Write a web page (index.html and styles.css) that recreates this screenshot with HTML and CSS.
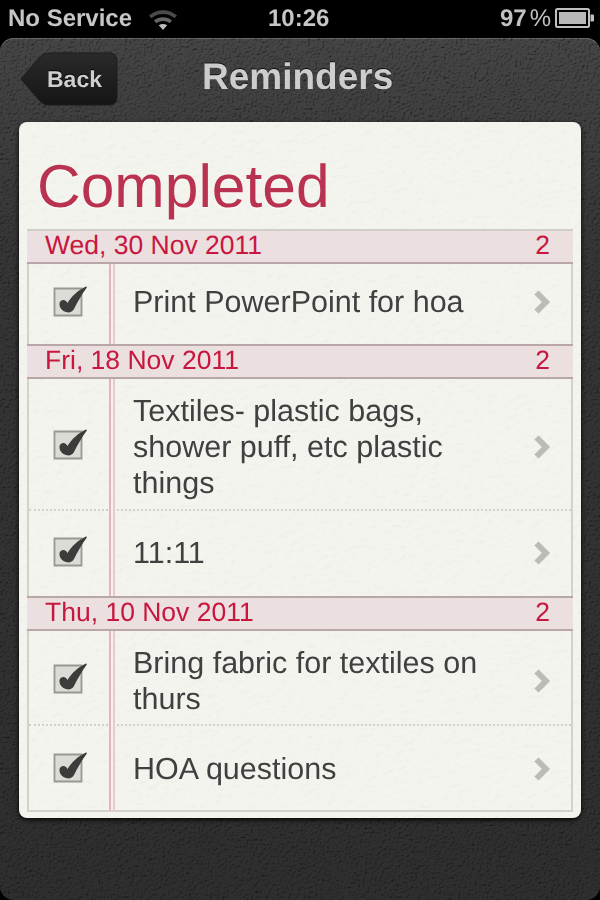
FILE: index.html
```html
<!DOCTYPE html>
<html lang="en">
<head>
  <meta charset="UTF-8">
  <meta name="viewport" content="width=device-width, initial-scale=1.0">
  <title>Reminders - Completed</title>
  <link rel="stylesheet" href="styles.css">
</head>
<body>
<svg class="defs" width="0" height="0">
  <defs>
    <filter id="leather" x="0" y="0" width="100%" height="100%">
      <feTurbulence type="fractalNoise" baseFrequency="0.42" numOctaves="3" seed="4"/>
      <feDiffuseLighting surfaceScale="2.6" diffuseConstant="1.1" lighting-color="#ffffff">
        <feDistantLight azimuth="235" elevation="62"/>
      </feDiffuseLighting>
    </filter>
    <filter id="paper" x="0" y="0" width="100%" height="100%">
      <feTurbulence type="fractalNoise" baseFrequency="0.14 0.2" numOctaves="4" seed="9"/>
      <feDiffuseLighting surfaceScale="0.9" diffuseConstant="1.1" lighting-color="#ffffff">
        <feDistantLight azimuth="235" elevation="66"/>
      </feDiffuseLighting>
    </filter>
    <symbol id="tick" viewBox="0 0 34 32">
      <path class="tick-box" d="M1.500 3.500h27v27h-27z"/>
      <path class="tick-mark" d="M6.500 18C7.500 14.500 11.500 14 13.500 16.500L14.500 18C18.500 11.500 25 5 33 1.500 34 1.200 34 2.500 33.500 3 29 9 24.500 17 21 24 19.500 27 16 28 13 27 9.500 26 6 23 6.500 18z"/>
    </symbol>
    <symbol id="chevron" viewBox="0 0 18 26">
      <path class="chevron-shade" d="M1 5.500l4.500-4.500 12 12-12 12-4.500-4.500 7.500-7.500z"/>
    </symbol>
  </defs>
</svg>

<div class="statusbar">
  <span class="carrier">No Service</span>
  <svg class="wifi" viewBox="0 0 30 22" width="30" height="22">
    <path class="wifi-outer" d="M1 7.500C9 .5 21 .5 29 7.500l-2.400 2.700C20 4.500 10 4.500 3.400 10.200z"/>
    <path class="wifi-mid" d="M6 12.500c5.200-4.300 12.800-4.300 18 0l-2.400 2.700c-3.800-3-9.400-3-13.200 0z"/>
    <path class="wifi-dot" d="M10.800 17.300c2.500-1.700 5.900-1.700 8.400 0L15 22z"/>
  </svg>
  <span class="clock">10:26</span>
  <span class="level">97<span class="percent">%</span></span>
  <svg class="battery" viewBox="0 0 40 20" width="40" height="20">
    <rect class="battery-shell" x="1" y="1" width="33" height="18" rx="1.500"/>
    <rect class="battery-fill" x="4" y="4" width="27" height="12"/>
    <path class="battery-tip" d="M35.500 6.500h2.500a1 1 0 0 1 1 1v5a1 1 0 0 1-1 1h-2.500z"/>
  </svg>
</div>

<div class="panel">
  <svg class="grain grain-leather"><rect width="100%" height="100%" filter="url(#leather)"/></svg>
  <div class="navbar">
    <a class="back">
      <svg class="back-shape" viewBox="0 0 98 54" width="98" height="54">
        <defs>
          <linearGradient id="backfill" x1="0" y1="0" x2="0" y2="1">
            <stop offset="0" stop-color="#2a2a2a"/>
            <stop offset="1" stop-color="#151515"/>
          </linearGradient>
        </defs>
        <path d="M1 27L19 6C22 2.500 25 1 29 1h60c5 0 8 3 8 8v36c0 5-3 8-8 8H29c-4 0-7-1.500-10-5z" fill="url(#backfill)" stroke="#1c1c1c"/>
      </svg>
      <span class="back-label">Back</span>
    </a>
    <h1 class="title">Reminders</h1>
  </div>

  <div class="card">
    <svg class="grain grain-paper"><rect width="100%" height="100%" filter="url(#paper)"/></svg>
    <h2 class="heading">Completed</h2>
    <div class="sheet">
      <div class="day day-first"><span>Wed, 30 Nov 2011</span><span>2</span></div>
      <div class="item item-a">
        <div class="mark"><svg class="tick"><use href="#tick"/></svg></div>
        <div class="margin"></div>
        <div class="body"><p>Print PowerPoint for hoa</p><svg class="chevron"><use href="#chevron"/></svg></div>
      </div>

      <div class="day"><span>Fri, 18 Nov 2011</span><span>2</span></div>
      <div class="item item-b">
        <div class="mark dotted"><svg class="tick"><use href="#tick"/></svg></div>
        <div class="margin"></div>
        <div class="body dotted"><p>Textiles- plastic bags,<br>shower puff, etc plastic<br>things</p><svg class="chevron"><use href="#chevron"/></svg></div>
      </div>
      <div class="item item-c">
        <div class="mark"><svg class="tick"><use href="#tick"/></svg></div>
        <div class="margin"></div>
        <div class="body"><p>11:11</p><svg class="chevron"><use href="#chevron"/></svg></div>
      </div>

      <div class="day"><span>Thu, 10 Nov 2011</span><span>2</span></div>
      <div class="item item-d">
        <div class="mark dotted"><svg class="tick"><use href="#tick"/></svg></div>
        <div class="margin"></div>
        <div class="body dotted"><p>Bring fabric for textiles on<br>thurs</p><svg class="chevron"><use href="#chevron"/></svg></div>
      </div>
      <div class="item item-e">
        <div class="mark"><svg class="tick"><use href="#tick"/></svg></div>
        <div class="margin"></div>
        <div class="body"><p>HOA questions</p><svg class="chevron"><use href="#chevron"/></svg></div>
      </div>
    </div>
  </div>
</div>
</body>
</html>
```

FILE: styles.css
```css
* {
  box-sizing: border-box;
}
html, body {
  margin: 0;
  height: 900px;
  overflow: hidden;
  background-color: #000;
}
body {
  font-family: "Liberation Sans", Arial, sans-serif;
  text-rendering: geometricPrecision;
  display: flex;
  flex-direction: column;
}
.defs {
  position: absolute;
}

/* status bar */
.statusbar {
  height: 38px;
  flex: none;
  display: flex;
  align-items: center;
  padding: 0 5px 0 8px;
  color: #c6c6c6;
  font-size: 24px;
  font-weight: bold;
}
.statusbar > * {
  flex: none;
}
.carrier {
  width: 140px;
}
.wifi {
  margin-top: -1px;
}
.wifi-outer { fill: #4a4a4a; }
.wifi-mid { fill: #666; }
.wifi-dot { fill: #bdbdbd; }
.clock {
  margin-left: 90px;
  width: 232px;
}
.level {
  width: 55px;
  color: #c2c2c2;
}
.percent {
  font-weight: normal;
  margin-left: 3px;
}
.battery {
  margin-top: -2px;
}
.battery-shell { fill: none; stroke: #c0c0c0; stroke-width: 2; }
.battery-fill { fill: #b8b8b8; }
.battery-tip { fill: #c0c0c0; }

/* leather panel */
.panel {
  flex: 1;
  position: relative;
  overflow: hidden;
  border-radius: 14px;
  background: linear-gradient(#464646, #363636 25%, #2f2f2f);
  box-shadow: inset 0 1px 0 #6c6c6c;
}
.grain {
  position: absolute;
  left: 0;
  top: 0;
  width: 100%;
  height: 100%;
  pointer-events: none;
}
.grain-leather {
  mix-blend-mode: multiply;
}
.grain-paper {
  mix-blend-mode: multiply;
  opacity: 0.3;
}
.navbar {
  height: 84px;
  display: flex;
  align-items: flex-start;
  padding: 14px 0 0 20px;
  position: relative;
}
.back {
  width: 98px;
  height: 54px;
  flex: none;
  position: relative;
  display: flex;
  align-items: center;
  padding-left: 27px;
}
.back-shape {
  position: absolute;
  left: 0;
  top: 0;
}
.back-label {
  position: relative;
  color: #cfcfcf;
  font-size: 23px;
  font-weight: bold;
  text-shadow: 0 -1px 0 #000;
}
.title {
  margin: 3px 0 0 84px;
  color: #cdcdcd;
  font-size: 37px;
  font-weight: bold;
  line-height: 44px;
  text-shadow: 0 -1px 0 #111;
}

/* paper card */
.card {
  position: relative;
  margin: 0 19px;
  height: 696px;
  padding: 0 8px;
  background-color: #f4f4ef;
  border-radius: 8px;
  box-shadow: 0 2px 5px rgba(0, 0, 0, 0.9);
  overflow: hidden;
}
.heading {
  position: relative;
  margin: 0;
  height: 107px;
  padding: 32px 0 0 10px;
  color: #b93350;
  font-size: 60.500px;
  font-weight: normal;
  line-height: 64px;
  text-shadow: 0 1px 0 #fff;
}
.sheet {
  position: relative;
  border: solid #d2d2cd;
  border-width: 0 2px 2px;
}
.day {
  height: 35px;
  margin: 0 -2px;
  padding: 0 23px 2px 18px;
  display: flex;
  justify-content: space-between;
  align-items: center;
  background-color: #ecdfe0;
  border-top: 2px solid #b9a6a8;
  border-bottom: 2px solid #b9a6a8;
  color: #c8173f;
  font-size: 26.500px;
}
.day-first {
  border-top-color: #d4cbcb;
}
.item {
  display: grid;
  grid-template-columns: 79px 9px 1fr;
}
.item-a { height: 80px; }
.item-b { height: 132px; }
.item-c { height: 85px; }
.item-d { height: 95px; }
.item-e { height: 84px; }
.mark {
  display: flex;
  align-items: center;
  padding-left: 24px;
}
.item-a .mark,
.item-c .mark {
  padding-bottom: 2px;
}
.item-b .mark,
.item-d .mark {
  padding-top: 4px;
}
.item-e .mark {
  padding-top: 2px;
}
.tick {
  width: 34px;
  height: 32px;
  margin-top: -4px;
}
.tick-box {
  fill: #dcdcd7;
  stroke: #989893;
  stroke-width: 1.800;
}
.tick-mark {
  fill: #3c3c3a;
}
.margin {
  background: linear-gradient(90deg, transparent 1px, #e3b3bf 1px, #e3b3bf 3px, transparent 3px, transparent 5px, #f2c4d0 5px, #f2c4d0 7px, transparent 7px);
}
.body {
  display: flex;
  align-items: center;
  justify-content: space-between;
  padding: 0 20px 0 16px;
}
.body p {
  margin: 0;
  color: #404040;
  font-size: 30.500px;
  line-height: 36px;
}
.item-a .body {
  padding-bottom: 4px;
}
.item-b .body,
.item-d .body {
  padding-top: 6px;
}
.item-c .body {
  padding-bottom: 2px;
}
.item-e .body {
  padding-top: 2px;
}
.dotted {
  border-bottom: 2px dotted #d2d2cb;
}
.chevron {
  width: 18px;
  height: 26px;
  flex: none;
}
.chevron-shade {
  fill: #bcbcb6;
  stroke: #fff;
  stroke-opacity: 0.5;
}
```
